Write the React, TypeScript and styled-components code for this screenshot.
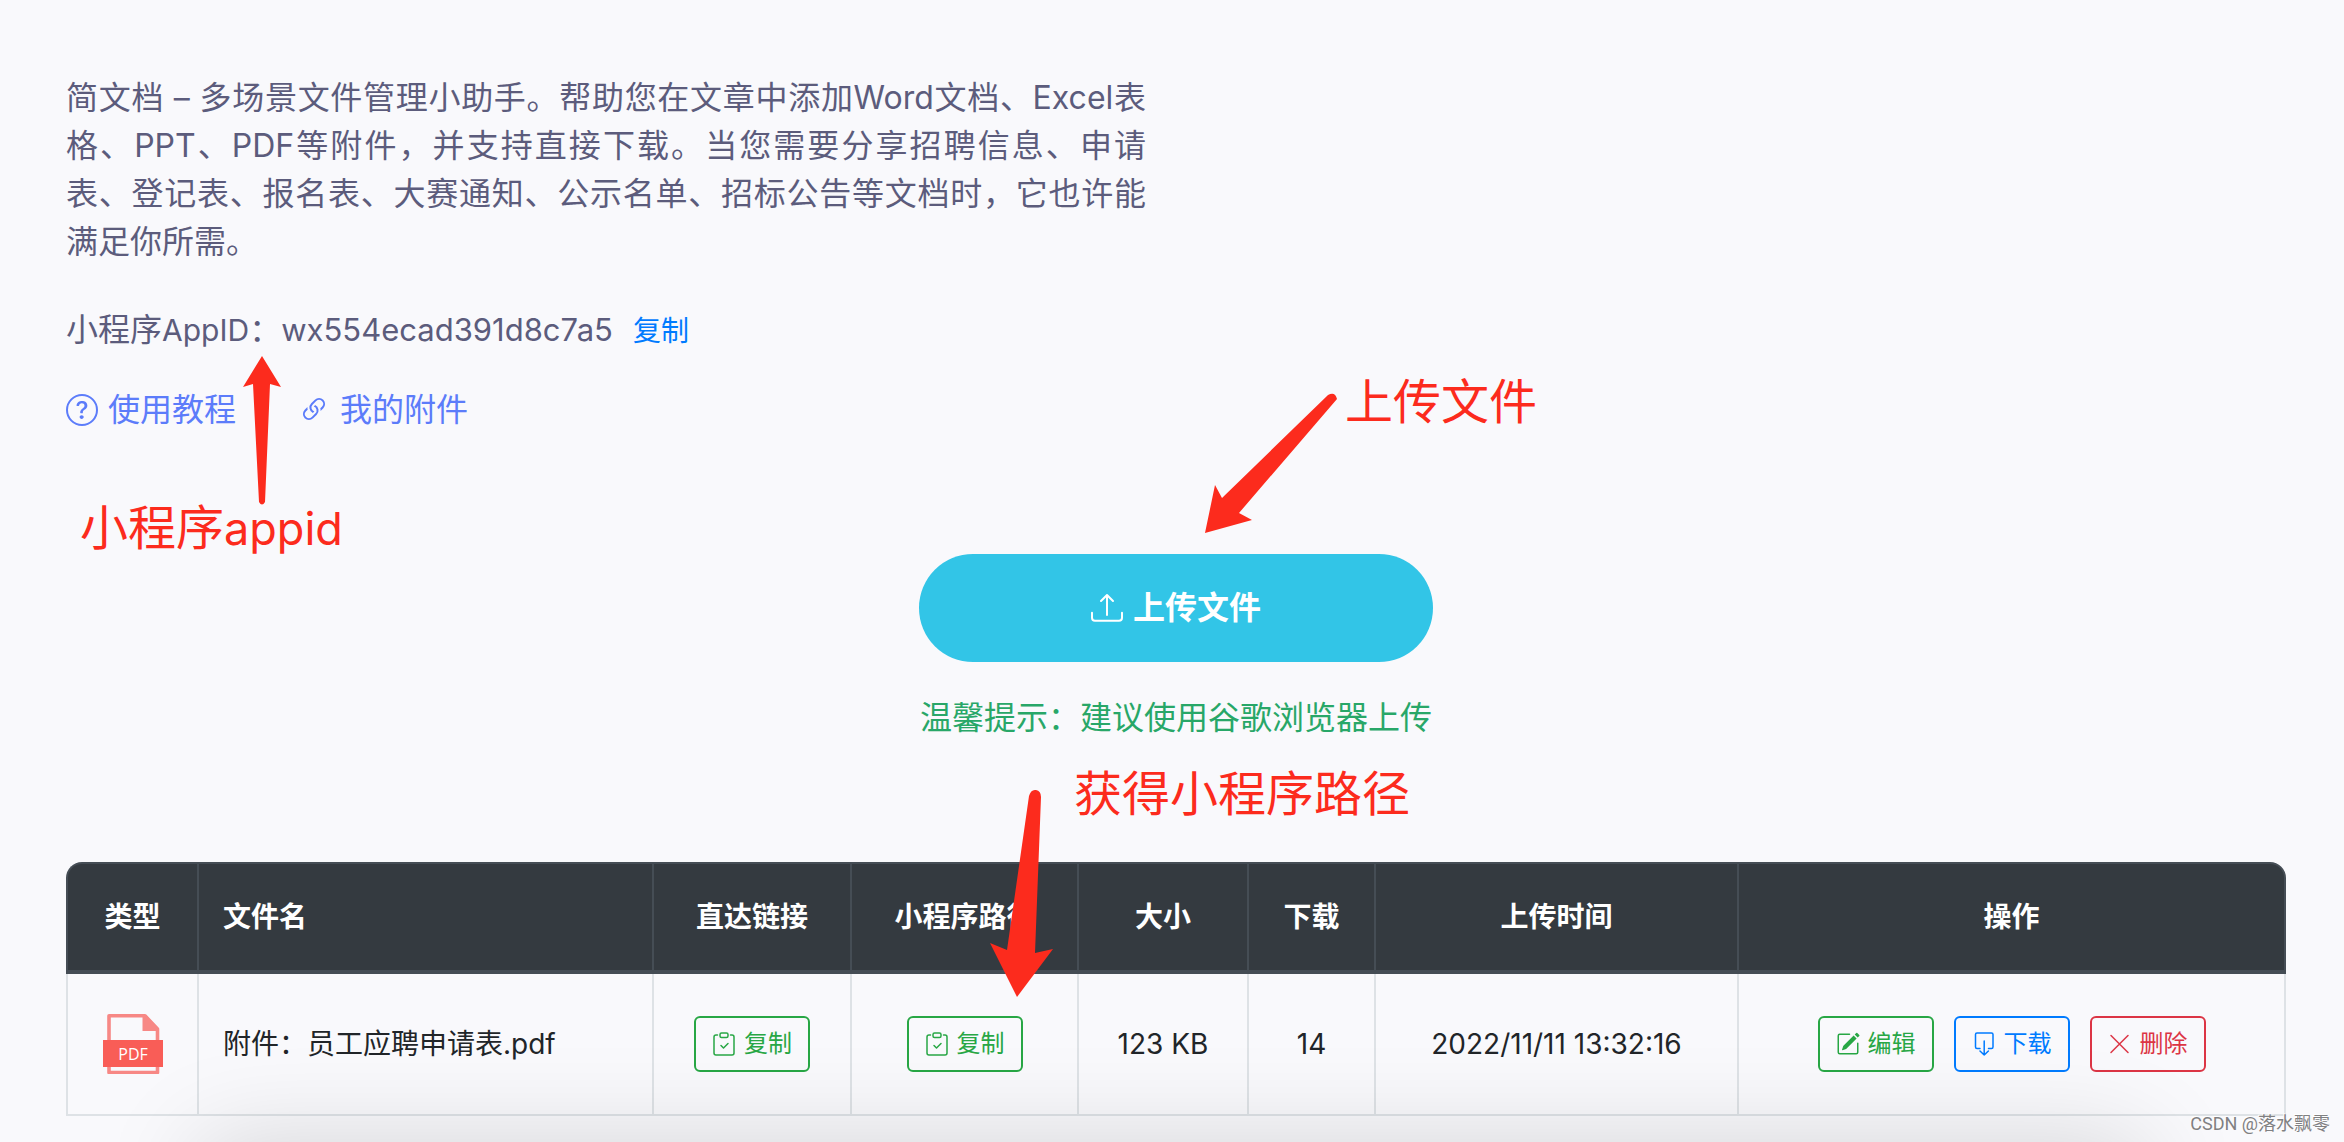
import React from "react";
import styled, { createGlobalStyle } from "styled-components";
import { BsLink45Deg, BsPencilSquare, BsQuestionCircle, BsUpload } from "react-icons/bs";

const GlobalStyle = createGlobalStyle`
  *, *::before, *::after { box-sizing: border-box; }
  html { background: #f9f9fc; }
  body {
    margin: 0;
    color: #212529;
    font-family: Inter, "Noto Sans CJK SC", sans-serif;
    font-size: 28px;
    line-height: 42px;
  }
`;

const Page = styled.main`
  position: relative;
  min-height: 100vh;
  padding: 74px 58px 24px 66px;
  overflow: hidden;
`;

const Intro = styled.p`
  width: 1080px;
  max-width: 100%;
  margin: 0 0 40px;
  color: #5c5c7c;
  font-size: 32px;
  line-height: 48px;
  text-align: justify;
`;

const AppIdRow = styled.div`
  display: flex;
  align-items: baseline;
  height: 48px;
  color: #5c5c7c;
  font-size: 32px;
  line-height: 48px;
`;

const AppIdLatin = styled.span`
  font-size: 30px;
`;

const AppIdValue = styled.span`
  margin-right: 20px;
  font-size: 31px;
`;

const CopyLink = styled.button`
  padding: 0;
  border: 0;
  background: none;
  color: #007bff;
  font: inherit;
  font-size: 28px;
  cursor: pointer;
`;

const Links = styled.nav`
  display: flex;
  align-items: center;
  gap: 62px;
  height: 48px;
  margin-top: 32px;
`;

const NavLink = styled.a`
  display: flex;
  align-items: center;
  gap: 10px;
  color: #5c7cfa;
  font-size: 32px;
  text-decoration: none;
`;

const UploadArea = styled.section`
  display: flex;
  flex-direction: column;
  align-items: center;
  margin-top: 120px;
`;

const UploadButton = styled.button`
  display: flex;
  align-items: center;
  justify-content: center;
  gap: 10px;
  width: 514px;
  height: 108px;
  border: 0;
  border-radius: 54px;
  background: #32c5e7;
  color: #fff;
  font: inherit;
  font-size: 32px;
  font-weight: 700;
  cursor: pointer;
`;

const Hint = styled.p`
  margin: 32px 0 0;
  color: #28a768;
  font-size: 32px;
  line-height: 48px;
`;

const FileTable = styled.table`
  width: 100%;
  margin-top: 120px;
  border-spacing: 0;
  table-layout: fixed;
`;

const Col = styled.col<{ $width?: number }>`
  width: ${(p) => (p.$width ? `${p.$width}px` : "auto")};
`;

const Th = styled.th<{ $left?: boolean }>`
  height: 112px;
  padding: 0 24px;
  border: 0 solid #454d55;
  border-width: 2px 0 4px 2px;
  background: #343a40;
  color: #fff;
  font-weight: 700;
  text-align: ${(p) => (p.$left ? "left" : "center")};
  white-space: nowrap;
  &:first-child { border-top-left-radius: 16px; }
  &:last-child { border-right-width: 2px; border-top-right-radius: 16px; }
`;

const Td = styled.td<{ $left?: boolean }>`
  height: 142px;
  padding: 0 24px;
  border: 0 solid #dee2e6;
  border-width: 0 0 2px 2px;
  text-align: ${(p) => (p.$left ? "left" : "center")};
  white-space: nowrap;
  &:last-child { border-right-width: 2px; }
  & > svg { display: block; margin: 0 auto; }
`;

const Actions = styled.div`
  display: flex;
  justify-content: center;
  gap: 20px;
`;

const ActionButton = styled.button<{ $color: string }>`
  display: inline-flex;
  align-items: center;
  justify-content: center;
  gap: 8px;
  width: 116px;
  height: 56px;
  padding: 0;
  border: 2px solid ${(p) => p.$color};
  border-radius: 6px;
  background: transparent;
  color: ${(p) => p.$color};
  font: inherit;
  font-size: 24px;
  vertical-align: middle;
  cursor: pointer;
`;

const BottomShade = styled.div`
  position: absolute;
  right: 200px;
  bottom: -200px;
  left: 200px;
  height: 200px;
  box-shadow: 0 0 100px rgba(0, 0, 0, 0.15);
  pointer-events: none;
`;

const Note = styled.span<{ $x: number; $y: number }>`
  position: absolute;
  left: ${(p) => p.$x}px;
  top: ${(p) => p.$y}px;
  display: flex;
  align-items: baseline;
  color: #fc2b1d;
  font-size: 48px;
  line-height: 64px;
  white-space: nowrap;
`;

const NoteLatin = styled.span`
  font-size: 45px;
`;

const Arrow = styled.svg<{ $x: number; $y: number }>`
  position: absolute;
  left: ${(p) => p.$x}px;
  top: ${(p) => p.$y}px;
  fill: #fc2b1d;
`;

const Watermark = styled.span`
  position: absolute;
  right: 14px;
  bottom: 6px;
  color: #808082;
  font-family: Roboto, "Noto Sans CJK SC", sans-serif;
  font-size: 18px;
  line-height: 24px;
  text-shadow: -1px -1px 0 #fff;
`;

const stroke = { fill: "none", stroke: "currentColor", strokeLinecap: "round", strokeLinejoin: "round" } as const;

const ClipboardIcon = () => (
  <svg width="24" height="24" viewBox="0 0 24 24" {...stroke} strokeWidth="1.5" aria-hidden="true">
    <path d="M5.5 3H4a2 2 0 0 0-2 2v16a2 2 0 0 0 2 2h16a2 2 0 0 0 2-2V5a2 2 0 0 0-2-2h-1.5" />
    <rect x="8" y="1" width="8" height="4.5" rx="1.5" />
    <path d="m9 13.5 2.500 2.500L16 11.500" />
  </svg>
);

const DownloadIcon = () => (
  <svg width="24" height="24" viewBox="0 0 24 24" {...stroke} strokeWidth="1.5" aria-hidden="true">
    <path d="M8 16.5H5A1.5 1.5 0 0 1 3.5 15V2.500A1.5 1.5 0 0 1 5 1h14.500A1.5 1.5 0 0 1 21 2.500V15a1.5 1.5 0 0 1-1.5 1.5h-3M12.200 9v14M8 19l4.200 4 4.200-4" />
  </svg>
);

const CrossIcon = () => (
  <svg width="24" height="24" viewBox="0 0 24 24" {...stroke} strokeWidth="1.5" aria-hidden="true">
    <path d="m3 3.500 17 17M20 3.500l-17 17" />
  </svg>
);

const PdfIcon = () => (
  <svg width="60" height="60" viewBox="0 0 60 60" role="img" aria-label="PDF">
    <path d="M6 1.800h36L54.500 15v43.500H6z" fill="none" stroke="#f78885" strokeWidth="3.6" strokeLinejoin="round" />
    <path d="M39.500 1H43l13 14v2H39.500z" fill="#f78885" />
    <rect y="26" width="60" height="27" fill="#f95d57" />
    <text x="30" y="46" fill="#fff" fontFamily="Open Sans, sans-serif" fontSize="16" textAnchor="middle">PDF</text>
  </svg>
);

const columns = [
  { title: "类型", width: 131 },
  { title: "文件名", width: 455, left: true },
  { title: "直达链接", width: 198 },
  { title: "小程序路径", width: 227 },
  { title: "大小", width: 170 },
  { title: "下载", width: 127 },
  { title: "上传时间", width: 363 },
  { title: "操作" },
];

const GREEN = "#28a745";
const BLUE = "#007bff";
const RED = "#dc3545";

export default function App() {
  return (
    <>
      <GlobalStyle />
      <Page>
        <Intro>
          简文档 – 多场景文件管理小助手。帮助您在文章中添加Word文档、Excel表格、PPT、PDF等附件，并支持直接下载。当您需要分享招聘信息、申请表、登记表、报名表、大赛通知、公示名单、招标公告等文档时，它也许能满足你所需。
        </Intro>
        <AppIdRow>
          <span>小程序</span>
          <AppIdLatin>AppID</AppIdLatin>
          <span>：</span>
          <AppIdValue>wx554ecad391d8c7a5</AppIdValue>
          <CopyLink type="button">复制</CopyLink>
        </AppIdRow>
        <Links>
          <NavLink href="#tutorial"><BsQuestionCircle size={32} />使用教程</NavLink>
          <NavLink href="#files"><BsLink45Deg size={32} />我的附件</NavLink>
        </Links>
        <UploadArea>
          <UploadButton type="button"><BsUpload size={32} />上传文件</UploadButton>
          <Hint>温馨提示：建议使用谷歌浏览器上传</Hint>
        </UploadArea>
        <FileTable>
          <colgroup>
            {columns.map((c) => <Col key={c.title} $width={c.width} />)}
          </colgroup>
          <thead>
            <tr>
              {columns.map((c) => <Th key={c.title} scope="col" $left={c.left}>{c.title}</Th>)}
            </tr>
          </thead>
          <tbody>
            <tr>
              <Td><PdfIcon /></Td>
              <Td $left>附件：员工应聘申请表.pdf</Td>
              <Td><ActionButton type="button" $color={GREEN}><ClipboardIcon />复制</ActionButton></Td>
              <Td><ActionButton type="button" $color={GREEN}><ClipboardIcon />复制</ActionButton></Td>
              <Td>123 KB</Td>
              <Td>14</Td>
              <Td>2022/11/11 13:32:16</Td>
              <Td>
                <Actions>
                  <ActionButton type="button" $color={GREEN}><BsPencilSquare size={24} />编辑</ActionButton>
                  <ActionButton type="button" $color={BLUE}><DownloadIcon />下载</ActionButton>
                  <ActionButton type="button" $color={RED}><CrossIcon />删除</ActionButton>
                </Actions>
              </Td>
            </tr>
          </tbody>
        </FileTable>
        <BottomShade />
        <Arrow $x={242} $y={355} width="40" height="152" viewBox="0 0 40 152" aria-hidden="true">
          <path d="M20 1 39 32 28 29 23 147Q20 152 17 147L11 29 1 32Z" />
        </Arrow>
        <Note $x={80} $y={496}>小程序<NoteLatin>appid</NoteLatin></Note>
        <Arrow $x={1204} $y={391} width="136" height="144" viewBox="0 0 136 144" aria-hidden="true">
          <path d="M1 142 11 94 18 107 124 4Q131 0 133 8L35 122 48 129Z" />
        </Arrow>
        <Note $x={1345} $y={370}>上传文件</Note>
        <Arrow $x={989} $y={788} width="66" height="212" viewBox="0 0 66 212" aria-hidden="true">
          <path d="M28 209 1 155 18 162 40 8Q42 1 47 2 52 3 52 9L46 165 64 161Z" />
        </Arrow>
        <Note $x={1074} $y={762}>获得小程序路径</Note>
        <Watermark>CSDN @落水飘零</Watermark>
      </Page>
    </>
  );
}
